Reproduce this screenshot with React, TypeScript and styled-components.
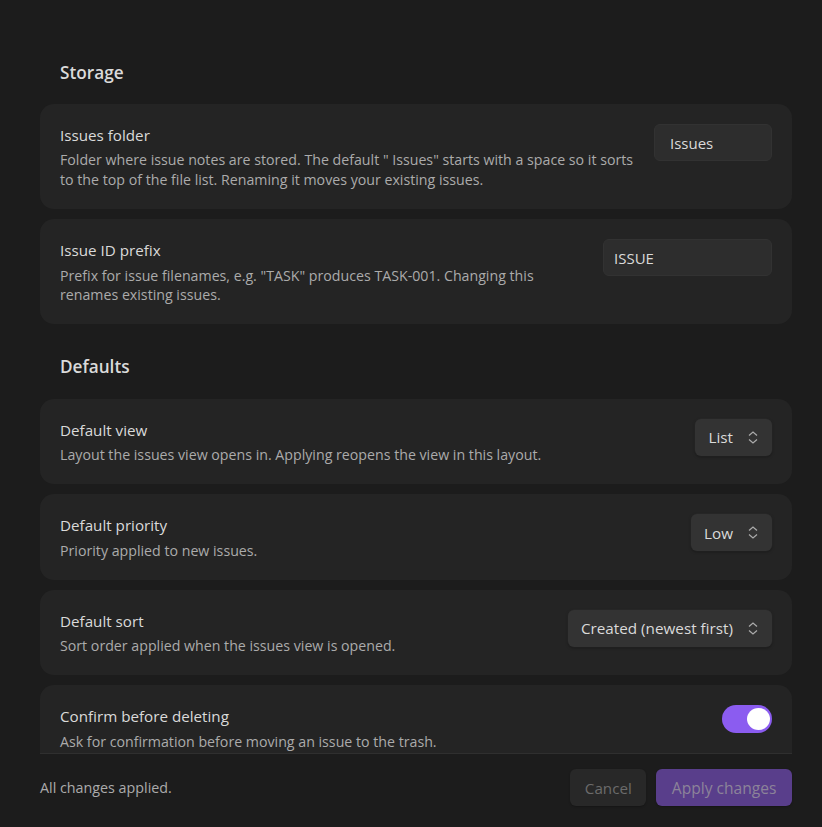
import styled, { createGlobalStyle } from 'styled-components';

const GlobalStyle = createGlobalStyle`
	html, body {
		margin: 0;
		height: 100%;
		background: #1c1c1c;
	}
	#root {
		height: 100%;
	}
`;

const Page = styled.div`
	height: 827px;
	display: flex;
	flex-direction: column;
	padding: 0 30px 0 40px;
	box-sizing: border-box;
	background: #1c1c1c;
	color: #dadada;
	font-family: 'Open Sans', 'Noto Sans', 'Liberation Sans', sans-serif;
	overflow: hidden;
`;

const Scroller = styled.div`
	flex: 1;
	min-height: 0;
	overflow: hidden;
	padding-top: 61px;
`;

const SectionTitle = styled.h2<{ $first?: boolean }>`
	margin: ${props => (props.$first ? '0 0 19px' : '30.6px 0 20px')};
	padding-left: 20px;
	font-size: 17.2px;
	line-height: 24px;
	font-weight: 600;
	color: #dadada;
`;

const Card = styled.div`
	display: flex;
	justify-content: space-between;
	align-items: flex-start;
	gap: 24px;
	padding: 20px 20px 19.2px;
	margin-bottom: 10px;
	background: #242424;
	border-radius: 14px;
`;

const Info = styled.div`
	flex: 1;
	min-width: 0;
`;

const Name = styled.div`
	font-size: 15.2px;
	line-height: 22.4px;
	color: #dadada;
`;

const Desc = styled.div`
	margin-top: 4px;
	font-size: 14.2px;
	line-height: 19.8px;
	white-space: nowrap;
	color: #ababab;
`;

const TextInput = styled.div<{ $width: number; $indent: number }>`
	flex: none;
	box-sizing: border-box;
	width: ${props => props.$width}px;
	height: 37px;
	padding: 1px 0 0 ${props => props.$indent}px;
	display: flex;
	align-items: center;
	background: #2d2d2d;
	border: 1px solid #323232;
	border-radius: 6px;
	font-size: 15px;
	color: #dadada;
`;

const Select = styled.div`
	flex: none;
	box-sizing: border-box;
	height: 37px;
	padding: 0 14px 0 13px;
	display: flex;
	align-items: center;
	gap: 15px;
	background: #333333;
	border-radius: 6px;
	box-shadow: 0 1px 3px rgba(0, 0, 0, 0.35), 0 0 0 0.5px rgba(255, 255, 255, 0.04);
	font-size: 15.25px;
	color: #dadada;
`;

const Toggle = styled.div`
	flex: none;
	width: 50px;
	height: 28px;
	padding: 3px 2px;
	box-sizing: border-box;
	display: flex;
	justify-content: flex-end;
	background: #8b5cf0;
	border-radius: 14px;
`;

const Knob = styled.div`
	width: 23px;
	height: 22px;
	background: #ffffff;
	border-radius: 50%;
`;

const Footer = styled.div`
	flex: none;
	height: 74px;
	padding-bottom: 6px;
	display: flex;
	justify-content: space-between;
	align-items: center;
	border-top: 1px solid #2f2f2f;
	box-sizing: border-box;
`;

const Status = styled.div`
	font-size: 14.3px;
	color: #ababab;
`;

const Actions = styled.div`
	display: flex;
	gap: 10px;
`;

const Button = styled.div<{ $primary?: boolean }>`
	height: 37px;
	padding: 0 ${props => (props.$primary ? '15.5px' : '14.5px')};
	display: flex;
	align-items: center;
	box-sizing: border-box;
	border-radius: 6px;
	font-size: ${props => (props.$primary ? '15.6px' : '15.2px')};
	background: ${props => (props.$primary ? '#593e8b' : '#282828')};
	color: ${props => (props.$primary ? '#8c8399' : '#6b6b6b')};
	box-shadow: 0 1px 2px rgba(0, 0, 0, 0.25);
`;

function UpDownIcon() {
	return (
		<svg width='10' height='13' viewBox='0 0 10 13' fill='none' stroke='#ababab' strokeWidth='1.2'>
			<path d='M1 4.5 L5 1 L9 4.5' />
			<path d='M1 8.5 L5 12 L9 8.5' />
		</svg>
	);
}

function App() {
	return (
		<Page>
			<GlobalStyle />
			<Scroller>
				<SectionTitle $first>Storage</SectionTitle>
				<Card>
					<Info>
						<Name>Issues folder</Name>
						<Desc>
							Folder where issue notes are stored. The default " Issues" starts with a space so it sorts
							<br />
							to the top of the file list. Renaming it moves your existing issues.
						</Desc>
					</Info>
					<TextInput $width={118} $indent={15}>Issues</TextInput>
				</Card>
				<Card>
					<Info>
						<Name>Issue ID prefix</Name>
						<Desc>
							Prefix for issue filenames, e.g. "TASK" produces TASK-001. Changing this
							<br />
							renames existing issues.
						</Desc>
					</Info>
					<TextInput $width={169} $indent={10}>ISSUE</TextInput>
				</Card>

				<SectionTitle>Defaults</SectionTitle>
				<Card>
					<Info>
						<Name>Default view</Name>
						<Desc>Layout the issues view opens in. Applying reopens the view in this layout.</Desc>
					</Info>
					<Select>List<UpDownIcon /></Select>
				</Card>
				<Card>
					<Info>
						<Name>Default priority</Name>
						<Desc>Priority applied to new issues.</Desc>
					</Info>
					<Select>Low<UpDownIcon /></Select>
				</Card>
				<Card>
					<Info>
						<Name>Default sort</Name>
						<Desc>Sort order applied when the issues view is opened.</Desc>
					</Info>
					<Select>Created (newest first)<UpDownIcon /></Select>
				</Card>
				<Card>
					<Info>
						<Name>Confirm before deleting</Name>
						<Desc>Ask for confirmation before moving an issue to the trash.</Desc>
					</Info>
					<Toggle><Knob /></Toggle>
				</Card>
			</Scroller>
			<Footer>
				<Status>All changes applied.</Status>
				<Actions>
					<Button>Cancel</Button>
					<Button $primary>Apply changes</Button>
				</Actions>
			</Footer>
		</Page>
	);
}

export default App;
